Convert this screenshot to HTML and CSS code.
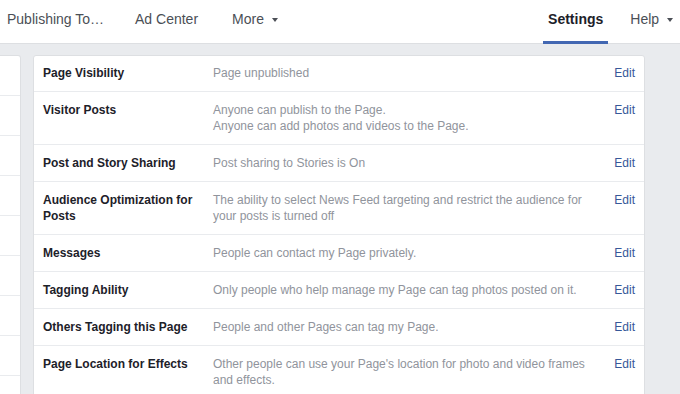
FILE: index.html
```html
<!DOCTYPE html>
<html lang="en">
<head>
<meta charset="utf-8">
<title>Page Settings</title>
<link rel="stylesheet" href="styles.css">
</head>
<body>
<header class="topnav">
  <nav class="nav-left">
    <a class="nav-item">Publishing To…</a>
    <a class="nav-item">Ad Center</a>
    <a class="nav-item more">More <span class="caret"></span></a>
  </nav>
  <nav class="nav-right">
    <a class="nav-item active">Settings</a>
    <a class="nav-item help">Help <span class="caret"></span></a>
  </nav>
</header>
<main class="content">
  <aside class="sidebar">
    <div class="side-row"></div>
    <div class="side-row"></div>
    <div class="side-row"></div>
    <div class="side-row"></div>
    <div class="side-row"></div>
    <div class="side-row"></div>
    <div class="side-row"></div>
    <div class="side-row"></div>
    <div class="side-row"></div>
  </aside>
  <section class="card">
    <div class="row">
      <div class="label">Page Visibility</div>
      <div class="desc">Page unpublished</div>
      <a class="edit">Edit</a>
    </div>
    <div class="row">
      <div class="label">Visitor Posts</div>
      <div class="desc">Anyone can publish to the Page.<br>Anyone can add photos and videos to the Page.</div>
      <a class="edit">Edit</a>
    </div>
    <div class="row">
      <div class="label">Post and Story Sharing</div>
      <div class="desc">Post sharing to Stories is On</div>
      <a class="edit">Edit</a>
    </div>
    <div class="row">
      <div class="label">Audience Optimization for Posts</div>
      <div class="desc">The ability to select News Feed targeting and restrict the audience for your posts is turned off</div>
      <a class="edit">Edit</a>
    </div>
    <div class="row">
      <div class="label">Messages</div>
      <div class="desc">People can contact my Page privately.</div>
      <a class="edit">Edit</a>
    </div>
    <div class="row">
      <div class="label">Tagging Ability</div>
      <div class="desc">Only people who help manage my Page can tag photos posted on it.</div>
      <a class="edit">Edit</a>
    </div>
    <div class="row">
      <div class="label">Others Tagging this Page</div>
      <div class="desc">People and other Pages can tag my Page.</div>
      <a class="edit">Edit</a>
    </div>
    <div class="row">
      <div class="label">Page Location for Effects</div>
      <div class="desc">Other people can use your Page's location for photo and video frames and effects.</div>
      <a class="edit">Edit</a>
    </div>
  </section>
</main>
</body>
</html>
```

FILE: styles.css
```css
* { box-sizing: border-box; }

html, body {
  margin: 0;
  padding: 0;
  background: #e9ebee;
  font-family: "Liberation Sans", Arial, Helvetica, sans-serif;
  overflow: hidden;
}

.topnav {
  display: flex;
  justify-content: space-between;
  height: 44px;
  background: #fff;
  border-bottom: 1px solid #dddfe2;
}

.nav-left,
.nav-right {
  display: flex;
  align-items: stretch;
}

.nav-left {
  padding-left: 7px;
  gap: 31px;
}

.nav-left .more {
  margin-left: 3px;
}

.nav-right {
  padding-right: 7px;
  gap: 22px;
}

.nav-item {
  display: flex;
  align-items: flex-start;
  padding-top: 11px;
  font-size: 14px;
  line-height: 16px;
  color: #4b4f56;
  text-decoration: none;
  white-space: pre;
}

.nav-item.active {
  padding: 11px 5px 0;
  font-weight: bold;
  color: #1d2129;
  border-bottom: 3px solid #4267b2;
  margin-bottom: -1px;
}

.caret {
  display: inline-block;
  width: 0;
  height: 0;
  margin-top: 7px;
  margin-left: 4px;
  border-left: 3px solid transparent;
  border-right: 3px solid transparent;
  border-top: 4px solid #4b4f56;
}

.content {
  display: flex;
  align-items: flex-start;
  gap: 12px;
  padding-top: 11px;
}

.sidebar {
  width: 21px;
  background: #fff;
  border: 1px solid #dddfe2;
  border-left: none;
  border-radius: 0 3px 0 0;
}

.side-row {
  height: 40px;
  border-bottom: 1px solid #e9ebee;
}

.card {
  width: 612px;
  background: #fff;
  border: 1px solid #dddfe2;
  border-radius: 3px 3px 0 0;
}

.row {
  display: grid;
  grid-template-columns: 160px 385px 1fr;
  column-gap: 10px;
  padding: 10px 9px 10px;
  border-bottom: 1px solid #e9ebee;
  font-size: 12px;
  line-height: 16px;
}

.row:first-child {
  padding-top: 9px;
}

.label {
  font-weight: bold;
  color: #1d2129;
}

.desc {
  color: #90949c;
}

.edit {
  color: #365899;
  text-align: right;
  text-decoration: none;
}
```
